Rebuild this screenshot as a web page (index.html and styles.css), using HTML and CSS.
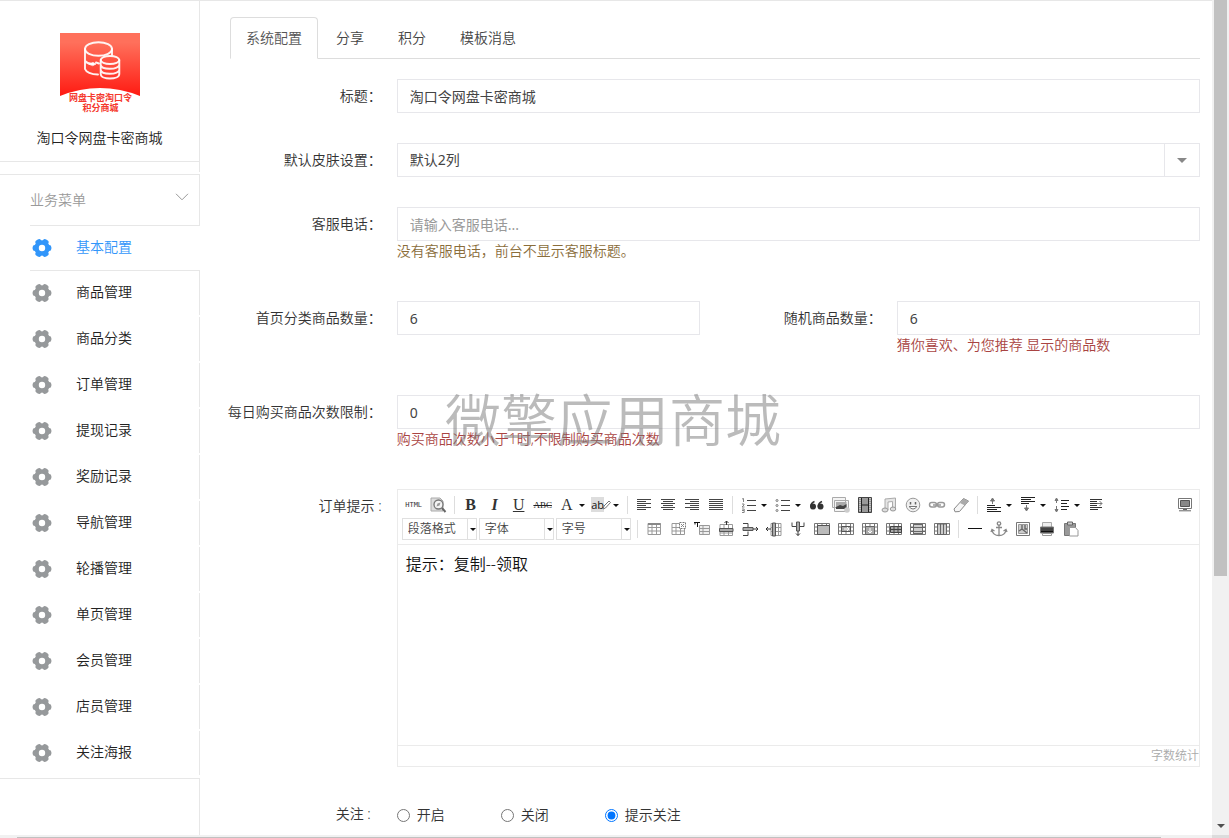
FILE: index.html
```html
<!DOCTYPE html>
<html lang="zh-CN">
<head>
<meta charset="utf-8">
<title>淘口令网盘卡密商城</title>
<link rel="stylesheet" href="styles.css">
</head>
<body>
<svg class="defs" aria-hidden="true">
  <symbol id="gear" viewBox="0 0 20 20">
    <circle cx="10" cy="10" r="5.500" fill="none" stroke="currentColor" stroke-width="4.600"/>
    <path d="M17 9.300v1.400M3 9.300v1.400M13 3.500l1.200.7M7 3.500l-1.200.7M13 16.500l1.200-.7M7 16.500l-1.200-.7" stroke="currentColor" stroke-width="4.800" stroke-linecap="round"/>
  </symbol>
  <symbol id="grid" viewBox="0 0 20 20">
    <path d="M4 4.500h12.500v11H4zM4 8.500h12.500M4 12h12.500M8 4.500v11M12.500 4.500v11" fill="#fff" stroke="#999"/>
  </symbol>
  <symbol id="cells" viewBox="0 0 20 20">
    <path d="M2.500 4.500h15v11h-15zM2.500 8h15M2.500 12h15M5.500 4.500v11M14.500 4.500v11M10 4.500v11" fill="#fff" stroke="#777"/>
  </symbol>
</svg>
<div class="screen">
  <div class="app">
    <aside class="sidebar">
      <div class="brand">
        <svg class="brand-logo" viewBox="0 0 80 80" aria-hidden="true">
          <defs><linearGradient id="red" x1="0" y1="0" x2="0" y2="1"><stop offset=".15" stop-color="#ff705b"/><stop offset="1" stop-color="#ff1a12"/></linearGradient></defs>
          <path d="M0 0h80v63Q40 47 0 63z" fill="url(#red)"/>
          <g fill="none" stroke="#fff" stroke-opacity=".92" stroke-width="1.900" stroke-linecap="round">
            <ellipse cx="38.500" cy="16" rx="13.500" ry="6.800"/>
            <path d="M25 16v20c1 3 6 5.500 13 5.500M52 16v6M25 28q3 3 7 3M36 29.500l3 1"/>
            <path d="M29 31l4-1.500 3 1.500-3 1.500z" fill="#fff" stroke-width=".8"/>
            <ellipse cx="50" cy="27" rx="9.300" ry="4"/>
            <path d="M40.700 27v14c0 6 18.600 6 18.600 0V27M40.700 32c1 5 17 5 18.600 0M40.700 37c1 5 17 5 18.600 0"/>
          </g>
          <text x="40.500" y="67.500" class="brand-mark">网盘卡密淘口令</text>
          <text x="40.500" y="78" class="brand-mark">积分商城</text>
        </svg>
        <div class="brand-name">淘口令网盘卡密商城</div>
      </div>
      <nav class="menu">
        <button class="menu-head" type="button">业务菜单
          <svg width="14" height="8" viewBox="0 0 14 8" aria-hidden="true"><path d="M1 .8l6 6 6-6" fill="none" stroke="#999"/></svg>
        </button>
        <a class="menu-item active" href="#"><svg><use href="#gear"/></svg>基本配置</a>
        <a class="menu-item" href="#"><svg><use href="#gear"/></svg>商品管理</a>
        <a class="menu-item" href="#"><svg><use href="#gear"/></svg>商品分类</a>
        <a class="menu-item" href="#"><svg><use href="#gear"/></svg>订单管理</a>
        <a class="menu-item" href="#"><svg><use href="#gear"/></svg>提现记录</a>
        <a class="menu-item" href="#"><svg><use href="#gear"/></svg>奖励记录</a>
        <a class="menu-item" href="#"><svg><use href="#gear"/></svg>导航管理</a>
        <a class="menu-item" href="#"><svg><use href="#gear"/></svg>轮播管理</a>
        <a class="menu-item" href="#"><svg><use href="#gear"/></svg>单页管理</a>
        <a class="menu-item" href="#"><svg><use href="#gear"/></svg>会员管理</a>
        <a class="menu-item" href="#"><svg><use href="#gear"/></svg>店员管理</a>
        <a class="menu-item" href="#"><svg><use href="#gear"/></svg>关注海报</a>
      </nav>
      <div class="sidebar-rest"></div>
    </aside>

    <main class="main">
      <nav class="tabs">
        <a class="tab active" href="#">系统配置</a>
        <a class="tab" href="#">分享</a>
        <a class="tab" href="#">积分</a>
        <a class="tab" href="#">模板消息</a>
      </nav>
      <form class="form">
        <div class="row">
          <label class="label" for="title">标题：</label>
          <div class="field wide"><input class="input" id="title" type="text" value="淘口令网盘卡密商城"></div>
        </div>
        <div class="row">
          <label class="label" for="skin">默认皮肤设置：</label>
          <div class="field wide"><div class="select"><select class="input" id="skin"><option>默认2列</option></select></div></div>
        </div>
        <div class="row">
          <label class="label" for="phone">客服电话：</label>
          <div class="field wide"><input class="input" id="phone" type="text" placeholder="请输入客服电话...">
            <p class="help brown">没有客服电话，前台不显示客服标题。</p></div>
        </div>
        <div class="row">
          <label class="label" for="home">首页分类商品数量：</label>
          <div class="field"><input class="input" id="home" type="text" value="6"></div>
          <label class="label" for="random">随机商品数量：</label>
          <div class="field"><input class="input" id="random" type="text" value="6">
            <p class="help red">猜你喜欢、为您推荐 显示的商品数</p></div>
        </div>
        <div class="row">
          <label class="label" for="limit">每日购买商品次数限制：</label>
          <div class="field wide"><input class="input" id="limit" type="text" value="0">
            <p class="help red">购买商品次数小于1时,不限制购买商品次数</p></div>
        </div>
        <div class="row">
          <label class="label" for="tip">订单提示 :</label>
          <div class="field wide">
            <div class="editor">
              <div class="toolbar">
                <div class="tools">
                  <button type="button" class="tool t-html">HTML</button>
                  <button type="button" class="tool" aria-label="预览"><svg viewBox="0 0 20 20"><path d="M3 3h9l3 3v10H3z" fill="#ddd" stroke="#aaa"/><circle cx="10.500" cy="9.500" r="4.500" fill="#f4f4f4" stroke="#777" stroke-width="1.300"/><path d="M8.500 11.500l1-3 3-1-1 3z" fill="#999"/><path d="M14 13l3.500 4" stroke="#666" stroke-width="2"/></svg></button>
                  <i class="sep"></i>
                  <button type="button" class="tool t-letter t-b">B</button>
                  <button type="button" class="tool t-letter t-i">I</button>
                  <button type="button" class="tool t-letter t-u">U</button>
                  <button type="button" class="tool t-abc">ABC</button>
                  <button type="button" class="tool t-letter split">A</button>
                  <button type="button" class="tool t-ab split"><span>ab</span><svg viewBox="0 0 20 20"><path d="M12 14l1-3 5-5 1.500 1.500-5 5.500z" fill="#fff" stroke="#777"/></svg></button>
                  <i class="sep"></i>
                  <button type="button" class="tool" aria-label="居左"><svg viewBox="0 0 20 20"><path d="M3 4.500h14M3 6.500h9M3 8.500h14M3 10.500h9M3 12.500h14M3 14.500h9" stroke="#444"/></svg></button>
                  <button type="button" class="tool" aria-label="居中"><svg viewBox="0 0 20 20"><path d="M3 4.500h14M5 6.500h10M3 8.500h14M5 10.500h10M3 12.500h14M5 14.500h10" stroke="#444"/></svg></button>
                  <button type="button" class="tool" aria-label="居右"><svg viewBox="0 0 20 20"><path d="M3 4.500h14M8 6.500h9M3 8.500h14M8 10.500h9M3 12.500h14M8 14.500h9" stroke="#444"/></svg></button>
                  <button type="button" class="tool" aria-label="两端对齐"><svg viewBox="0 0 20 20"><path d="M3 4.500h14M3 6.500h14M3 8.500h14M3 10.500h14M3 12.500h14M3 14.500h14" stroke="#444"/></svg></button>
                  <i class="sep"></i>
                  <button type="button" class="tool split" aria-label="有序列表"><svg viewBox="0 0 20 20"><path d="M3 4l1.500-.5V7M3 9h2v1L3 12h2.500M3 14h2.200v3.500H3M3 15.500h2" fill="none" stroke="#777" stroke-width=".9"/><path d="M8 5.500h9M8 10.500h9M8 15.500h9" stroke="#444"/></svg></button>
                  <button type="button" class="tool split" aria-label="无序列表"><svg viewBox="0 0 20 20"><g fill="none" stroke="#777"><circle cx="4" cy="5.500" r="1"/><circle cx="4" cy="10.500" r="1"/><circle cx="4" cy="15.500" r="1"/></g><path d="M8 5.500h9M8 10.500h9M8 15.500h9" stroke="#444"/></svg></button>
                  <button type="button" class="tool" aria-label="引用"><svg viewBox="0 0 20 20"><g fill="#333"><circle cx="6" cy="11.500" r="3"/><circle cx="13.500" cy="11.500" r="3"/></g><path d="M3.800 11.500Q3.800 8 7.500 6.500M11.300 11.500q0-3.500 3.700-5" fill="none" stroke="#333" stroke-width="1.500"/></svg></button>
                  <button type="button" class="tool" aria-label="图片"><svg viewBox="0 0 20 20"><path d="M1.500 2.500h13v10h-13zM3.500 5.500h14v11h-14z" fill="#f4f4f4" stroke="#aaa"/><path d="M5 7h10.500v7H5z" fill="#aaa"/><path d="M5 14v-2l4-2 3 1 3.500-2v5z" fill="#444"/><circle cx="16" cy="15" r="2.800" fill="#ccc"/></svg></button>
                  <button type="button" class="tool" aria-label="视频"><svg viewBox="0 0 20 20"><path d="M3.500 2.500h13v15h-13z" fill="#999" stroke="#444"/><path d="M5 3v14M15 3v14" stroke="#eee" stroke-dasharray="1 1"/><path d="M6.500 3v14M13.500 3v14M7 10h6" stroke="#222"/></svg></button>
                  <button type="button" class="tool" aria-label="音乐"><svg viewBox="0 0 20 20"><path d="M6 14V4l10.500-1v11h-3V6.500L9 7v8" fill="#e5e5e5" stroke="#aaa"/><g fill="#ddd" stroke="#999"><ellipse cx="6" cy="15" rx="3" ry="2"/><ellipse cx="14" cy="14" rx="2.800" ry="2"/></g></svg></button>
                  <button type="button" class="tool" aria-label="表情"><svg viewBox="0 0 20 20"><circle cx="10" cy="10" r="6.800" fill="#f0f0f0" stroke="#999"/><path d="M7.500 7v2.500M12.500 7v2.500" stroke="#666" stroke-width="1.500"/><path d="M6 11.500q4 5 8 0z" fill="#fff" stroke="#777"/></svg></button>
                  <button type="button" class="tool" aria-label="链接"><svg viewBox="0 0 20 20"><g fill="none" stroke="#999" stroke-width="1.500"><rect x="2.500" y="7.500" width="7" height="4.500" rx="2.200"/><rect x="10.500" y="7.500" width="7" height="4.500" rx="2.200"/><path d="M6 10h8"/></g></svg></button>
                  <button type="button" class="tool" aria-label="清除格式"><svg viewBox="0 0 20 20"><path d="M3 14l9.500-10.500 5 2.500L8.500 16.500 4 16.800z" fill="#f6f6f6" stroke="#888"/><path d="M9 8l5 2.500 3.500-4.500-5-2.500z" fill="#aaa"/></svg></button>
                  <i class="sep"></i>
                  <button type="button" class="tool split" aria-label="段前距"><svg viewBox="0 0 20 20"><path d="M3 10.500h8M3 12.500h14M3 14.500h10M3 16.500h14" stroke="#222"/><path d="M8.500 9V4M6.500 6l2-3 2 3z" fill="#777" stroke="#777"/></svg></button>
                  <button type="button" class="tool split" aria-label="段后距"><svg viewBox="0 0 20 20"><path d="M3 2.500h14M3 4.500h10M3 6.500h14M3 8.500h8" stroke="#222"/><path d="M8.500 10v5M6.500 13l2 3 2-3z" fill="#777" stroke="#777"/></svg></button>
                  <button type="button" class="tool split" aria-label="行间距"><svg viewBox="0 0 20 20"><path d="M9 5.500h8M9 8.500h6M9 11.500h8M9 14.500h6" stroke="#222"/><path d="M4.500 8V4M3 5.500l1.500-2.500L6 5.500zM4.500 11v5M3 14.500L4.500 17 6 14.500z" fill="#777" stroke="#777"/></svg></button>
                  <button type="button" class="tool" aria-label="缩进"><svg viewBox="0 0 20 20"><path d="M4 4.500h12M4 6.500h7M4 8.500h7M4 10.500h7M4 12.500h12M4 14.500h8" stroke="#333"/><path d="M11 8.500h5M13.500 6l2.500 2.500-2.500 2.500" fill="none" stroke="#777"/></svg></button>
                  <button type="button" class="tool last" aria-label="全屏"><svg viewBox="0 0 20 20"><path d="M3.500 3.500h13v10h-13z" fill="#fff" stroke="#777"/><path d="M5.500 5.500h9v6h-9z" fill="#888" stroke="#555"/><path d="M8 14.500h4M4 15.800h12" stroke="#666"/></svg></button>
                </div>
                <div class="tools">
                  <div class="combo"><select aria-label="段落格式"><option>段落格式</option></select></div>
                  <div class="combo"><select aria-label="字体"><option>字体</option></select></div>
                  <div class="combo"><select aria-label="字号"><option>字号</option></select></div>
                  <i class="sep"></i>
                  <button type="button" class="tool" aria-label="表格"><svg viewBox="0 0 20 20"><use href="#grid"/><path d="M4 5h12.500" stroke="#888" stroke-width="2"/></svg></button>
                  <button type="button" class="tool" aria-label="删除表格"><svg viewBox="0 0 20 20"><use href="#grid"/><path d="M11.500 3.500h6v6h-6z" fill="#fff" stroke="#777" stroke-dasharray="2 1"/><path d="M13 5l3 3M16 5l-3 3" stroke="#888"/></svg></button>
                  <button type="button" class="tool" aria-label="表前插入段落"><svg viewBox="0 0 20 20"><path d="M7.500 6.500h10v9h-10zM7.500 9.500h10M7.500 12.500h10M11 6.500v9" fill="#eee" stroke="#999"/><path d="M2 3.500h6M5.500 3v5M3 3.500v2" stroke="#111" fill="none"/></svg></button>
                  <button type="button" class="tool" aria-label="插入行"><svg viewBox="0 0 20 20"><path d="M4 5.500h12.500v11H4zM8 5.500v11M12.500 5.500v11M4 14h12.500" fill="#fff" stroke="#999"/><path d="M3.500 9.500h13.500v3H3.500z" fill="#aaa" stroke="#555"/><path d="M10.500 6V2M8.500 4l2-2 2 2" stroke="#333" fill="none"/></svg></button>
                  <button type="button" class="tool" aria-label="删除行"><svg viewBox="0 0 20 20"><path d="M3 4.500h5v4M3 16.500h5v-4" fill="none" stroke="#444"/><path d="M3 8.500h10v3H3z" fill="#aaa" stroke="#555"/><path d="M13 10h5M16 8l2 2-2 2" fill="none" stroke="#333"/></svg></button>
                  <button type="button" class="tool" aria-label="插入列"><svg viewBox="0 0 20 20"><path d="M7 4.500h10v12H7zM7 8.500h10M7 12.500h10M14.500 4.500v12" fill="#fff" stroke="#999"/><path d="M8.500 4h3v13h-3z" fill="#aaa" stroke="#555"/><path d="M7 10H2M4 8l-2 2 2 2" fill="none" stroke="#333"/></svg></button>
                  <button type="button" class="tool" aria-label="删除列"><svg viewBox="0 0 20 20"><path d="M4 3.500v4h4M16 3.500v4h-4" fill="none" stroke="#444"/><path d="M8.500 3h3v9h-3z" fill="#aaa" stroke="#555"/><path d="M10 12v4.500M8 14.500l2 2 2-2" fill="none" stroke="#333"/></svg></button>
                  <button type="button" class="tool" aria-label="合并单元格"><svg viewBox="0 0 20 20"><use href="#cells"/><path d="M5.500 6.500h12v9h-12z" fill="#bbb" stroke="#555"/></svg></button>
                  <button type="button" class="tool" aria-label="右合并"><svg viewBox="0 0 20 20"><use href="#cells"/><path d="M5.500 7.500h9v5h-9z" fill="#aaa" stroke="#555"/><path d="M8 10h5M11 8l2 2-2 2" stroke="#fff" fill="none"/></svg></button>
                  <button type="button" class="tool" aria-label="下合并"><svg viewBox="0 0 20 20"><use href="#cells"/><path d="M5.500 7.500h9v8h-9z" fill="#aaa" stroke="#666"/><path d="M10 9v5M8 12l2 2 2-2" stroke="#fff" fill="none"/></svg></button>
                  <button type="button" class="tool" aria-label="拆分"><svg viewBox="0 0 20 20"><use href="#cells"/><path d="M6.500 7.500h11v6h-11zM6.500 10.500h11M10 7.500v6M14 7.500v6" fill="#aaa" stroke="#444"/></svg></button>
                  <button type="button" class="tool" aria-label="拆分成行"><svg viewBox="0 0 20 20"><use href="#cells"/><path d="M5.500 5.500h9v9h-9zM3 8.500h14M3 12.500h14" fill="#ccc" stroke="#666"/></svg></button>
                  <button type="button" class="tool" aria-label="拆分成列"><svg viewBox="0 0 20 20"><use href="#cells"/><path d="M5.500 5v10.500h9V5zM8.500 5v10M11.500 5v10" fill="#ccc" stroke="#666"/></svg></button>
                  <i class="sep"></i>
                  <button type="button" class="tool" aria-label="分隔线"><svg viewBox="0 0 20 20"><path d="M3 9.500h14" stroke="#111"/></svg></button>
                  <button type="button" class="tool" aria-label="锚点"><svg viewBox="0 0 20 20"><g fill="none" stroke="#888" stroke-width="1.300"><circle cx="10" cy="4.500" r="1.700"/><path d="M10 6v10M7 8.500h6M3 11q1 5.500 7 5.500t7-5.500M2 13l1-2.500L5.500 12M14.500 12l2.500-1.500 1 2.500"/></g></svg></button>
                  <button type="button" class="tool" aria-label="地图"><svg viewBox="0 0 20 20"><path d="M3.500 3.500h13v13h-13z" fill="#fff" stroke="#777"/><path d="M5.500 5.500h9v9h-9z" fill="#ccc" stroke="#999"/><path d="M6 12l3-2V6M9 10l5 4M12 6v4h2" fill="none" stroke="#666" stroke-width="1.400"/></svg></button>
                  <button type="button" class="tool" aria-label="打印"><svg viewBox="0 0 20 20"><path d="M5.500 3.500h9v5h-9z" fill="#eee" stroke="#aaa"/><path d="M3.500 8h13v6h-13z" fill="#444" stroke="#777"/><path d="M4 12.500h12" stroke="#111"/><path d="M5.500 14.500h9v2h-9z" fill="#fff" stroke="#999"/></svg></button>
                  <button type="button" class="tool" aria-label="粘贴"><svg viewBox="0 0 20 20"><path d="M3.500 4.500h11v12h-11z" fill="#999" stroke="#777"/><path d="M6.500 3h5v3h-5z" fill="#ccc" stroke="#666"/><path d="M8.500 8.500h6l2.500 3v5.500H8.500z" fill="#fff" stroke="#999"/></svg></button>
                </div>
              </div>
              <textarea class="editor-body" id="tip">提示：复制--领取</textarea>
              <div class="editor-foot">字数统计</div>
            </div>
          </div>
        </div>
        <div class="row">
          <span class="label" id="follow">关注 :&nbsp;&nbsp;&nbsp;</span>
          <div class="field wide radios" role="radiogroup" aria-labelledby="follow">
            <label><input type="radio" name="follow">开启</label>
            <label><input type="radio" name="follow">关闭</label>
            <label><input type="radio" name="follow" checked>提示关注</label>
          </div>
        </div>
      </form>
      <div class="watermark">微擎应用商城</div>
    </main>
    <div class="vscroll"><div class="vthumb"></div><span class="varrow"></span></div>
  </div>
  <div class="hscroll"><div class="hthumb"></div><div class="corner"></div></div>
</div>
</body>
</html>
```
FILE: styles.css
```css
* { box-sizing: border-box; }
body {
  margin: 0;
  font: 350 14px/20px "Noto Sans", "Noto Sans CJK SC", sans-serif;
  color: #333;
  background: #fff;
}
a { color: inherit; text-decoration: none; }
p { margin: 0; }
button, input, select, textarea { font: inherit; color: inherit; margin: 0; }
button { border: 0; background: none; padding: 0; }
.defs { display: none; }

.screen { display: flex; flex-direction: column; height: 100vh; overflow: hidden; }
.app { flex: 1; display: flex; min-height: 0; }

/* Sidebar */
.sidebar { flex: none; width: 200px; display: flex; flex-direction: column; border-top: 1px solid #e7e7e7; color: #222; }
.brand { height: 171px; padding-top: 32px; border-right: 1px solid #e7e7e7; text-align: center; flex: none; }
.brand-logo { display: block; width: 80px; height: 80px; margin: 0 auto; }
.brand-mark { font: bold 9px "Noto Sans CJK SC", sans-serif; fill: #f5392d; text-anchor: middle; }
.brand-name { padding: 15px 0 13px; border-bottom: 1px solid #e7e7e7; }
.menu { flex: none; margin-top: 2px; padding-bottom: 1px; border-top: 1px solid #e7e7e7; border-bottom: 1px solid #e7e7e7; }
.menu-head {
  display: flex; justify-content: space-between; align-items: center;
  width: 170px; height: 51px; margin-left: 30px; padding-right: 10px;
  border: solid #e7e7e7; border-width: 0 1px 1px 0; color: #999;
}
.menu-head svg { margin-bottom: 6px; }
.menu-item {
  display: flex; align-items: center; gap: 24px;
  height: 44px; margin: 0 0 2px 30px; padding: 0 0 2px 2px;
  border-right: 1px solid #e7e7e7;
}
.menu-item svg { width: 20px; height: 20px; color: #96999b; margin-top: 2px; }
.menu-item.active { height: 45px; margin-bottom: 0; border-right: 0; border-bottom: 1px solid #e7e7e7; color: #3296fa; }
.menu-item.active svg { color: #3296fa; }
.sidebar-rest { flex: 1; border-right: 1px solid #e7e7e7; }

/* Content */
.main { position: relative; flex: 1; min-width: 0; padding: 16px 12px 0 30px; border-top: 1px solid #e7e7e7; overflow: hidden; }
.tabs { display: flex; gap: 2px; border-bottom: 1px solid #ddd; color: #444; }
.tab { padding: 10px 15px; margin-bottom: -1px; border: 1px solid transparent; }
.tab.active { border-color: #ddd #ddd #fff; border-radius: 4px 4px 0 0; color: #555; }
.form { display: grid; gap: 30px; margin: 20px -15px 0; }
.row { display: grid; grid-template-columns: 2fr 4fr 2fr 4fr; }
.label { text-align: right; line-height: 34px; white-space: nowrap; }
.field { padding: 0 15px; min-width: 0; }
.wide { grid-column: span 3; }
.input {
  display: block; width: 100%; height: 34px; padding: 0 12px;
  border: 1px solid #e7e7eb; border-radius: 0; background: #fff; color: #444; outline: 0;
  font-weight: 400;
}
.input::placeholder { color: #999; opacity: 1; }
.select { position: relative; }
.select select, .combo select { appearance: none; }
.select::before { content: ""; position: absolute; right: 35px; top: 1px; bottom: 1px; width: 1px; background: #e7e7eb; }
.select::after { content: ""; position: absolute; right: 13px; top: 15px; border: 5px solid transparent; border-top-color: #888; border-bottom: 0; }
.help { margin-bottom: 10px; }
.brown { color: #8a6d3b; }
.red { color: #a94442; }

/* Rich text editor */
.editor { border: 1px solid #ebebeb; }
.toolbar { padding: 3px 4px; border-bottom: 1px solid #ebebeb; }
.tools { display: flex; align-items: center; height: 24px; }
.tool { position: relative; flex: none; width: 24px; height: 24px; text-align: center; white-space: nowrap; }
.tool svg { display: block; width: 20px; height: 20px; margin: 0 2px; }
.tool.last { margin-left: auto; margin-right: -2px; }
.split { width: 34px; padding-right: 10px; }
.split::after, .combo::after {
  content: ""; position: absolute; right: 4px; top: 11px;
  border: 3px solid transparent; border-top-color: #111; border-bottom: 0;
}
.sep { flex: none; width: 1px; height: 18px; margin: 0 4px; background: #ddd; }
.t-letter { font: 16px/24px "Liberation Serif", serif; color: #333; }
.t-b { font-weight: bold; }
.t-i { font-style: italic; font-weight: bold; }
.t-u { text-decoration: underline; }
.t-html { font: 7px/24px "DejaVu Sans Mono", monospace; color: #333; }
.t-abc { font: 9px/24px "Liberation Serif", serif; color: #222; text-decoration: line-through; }
.t-ab { font: 11px/24px "Open Sans", sans-serif; color: #111; }
.t-ab span { background: #ddd; margin-right: 6px; }
.t-ab svg { position: absolute; left: 0; top: 2px; }
.combo { position: relative; flex: none; width: 75px; margin-right: 2px; }
.combo select { display: block; width: 100%; height: 22px; padding: 0 5px; border: 1px solid #e0e0e0; border-radius: 0; background: #fff; font-size: 12px; line-height: 20px; color: #444; }
.combo::before { content: ""; position: absolute; right: 9px; top: 1px; bottom: 1px; width: 1px; background: #e0e0e0; }
.combo::after { right: 1px; top: 10px; }
.editor-body { display: block; width: 100%; height: 200px; padding: 8px; border: 0; resize: none; outline: 0; font-size: 16px; line-height: 22px; color: #111; }
.editor-foot { border-top: 1px solid #ebebeb; text-align: right; font-size: 12px; color: #aaa; }

.radios { display: flex; gap: 56px; }
.radios label { display: flex; align-items: center; gap: 7px; height: 36px; }
.radios input { width: 13px; height: 13px; accent-color: #0075ff; }

.watermark {
  position: absolute; left: 245px; top: 376px; pointer-events: none;
  font: 350 56px/80px "Noto Sans CJK SC", sans-serif; color: rgba(120, 120, 120, .5); white-space: nowrap;
}

/* Scroll bars */
.vscroll { flex: none; width: 17px; background: #f1f1f1; display: flex; flex-direction: column; justify-content: space-between; align-items: center; }
.vthumb { width: 13px; height: 69%; background: #c1c1c1; }
.varrow { margin-bottom: 7px; border: 4px solid transparent; border-top-color: #505050; border-bottom: 0; }
.hscroll { flex: none; display: flex; height: 3px; padding-left: 17px; background: #f1f1f1; }
.hthumb { flex: 1; height: 1px; margin: 2px 51px 0 0; background: #c1c1c1; }
.corner { width: 17px; background: #dcdcdc; }
```
